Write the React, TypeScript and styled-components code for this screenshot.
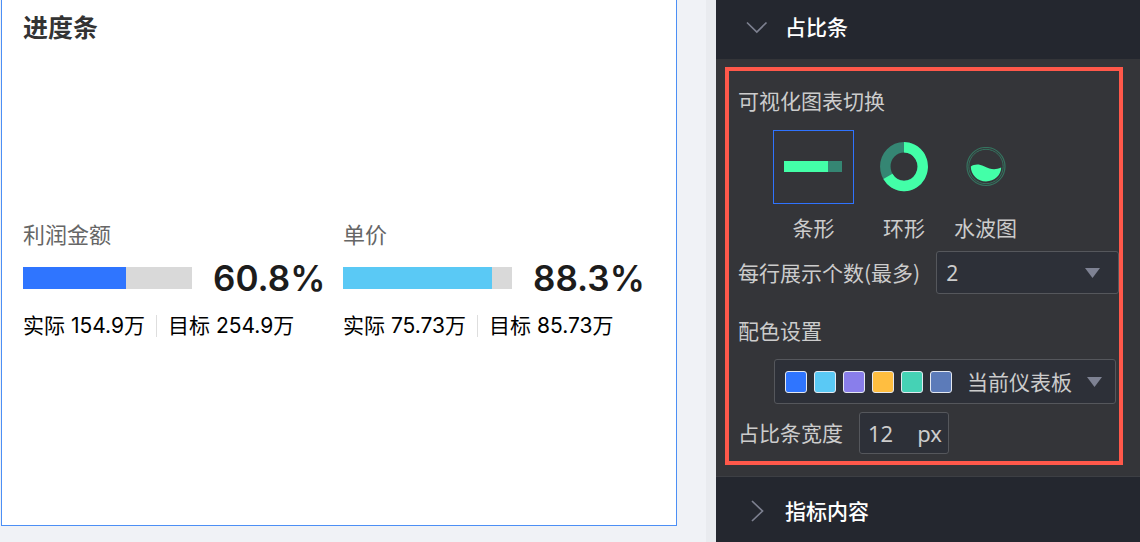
import React, { useState } from "react";
import styled, { createGlobalStyle } from "styled-components";

const GlobalStyle = createGlobalStyle`
  *, *::before, *::after { box-sizing: border-box; }
  body {
    margin: 0;
    background: #f0f2f6;
    font-family: "Noto Sans CJK SC", sans-serif;
  }
  h1, h2, p, fieldset { margin: 0; padding: 0; border: 0; }
`;

const Page = styled.div`
  display: flex;
  min-height: 100vh;
`;

const Canvas = styled.main`
  display: flex;
  flex: 1;
  min-width: 0;
  padding: 0 29px 16px 1px;
`;

const Card = styled.section`
  display: flex;
  flex: 1;
  flex-direction: column;
  min-width: 0;
  padding: 11px 33px 8px 21px;
  border: 1px solid #4c8ff5;
  border-top: 0;
  background: #fff;
`;

const CardTitle = styled.h1`
  color: #333;
  font-size: 25px;
  font-weight: 700;
  line-height: 30px;
`;

const Metrics = styled.div`
  display: grid;
  flex: 1;
  grid-template-columns: 1fr 1fr;
  align-content: center;
  column-gap: 20px;
`;

const Metric = styled.article`
  display: flex;
  flex-direction: column;
  min-width: 0;
`;

const MetricName = styled.h2`
  color: #666;
  font-size: 22px;
  font-weight: 400;
  line-height: 30px;
`;

const MetricBar = styled.div`
  display: flex;
  align-items: center;
  gap: 21px;
  margin: 8px 0 11px;
`;

const Track = styled.div`
  flex: 1;
  height: 22px;
  background: #d9d9d9;
`;

const Fill = styled.div<{ $color: string }>`
  height: 100%;
  background: ${(p) => p.$color};
`;

const Percent = styled.strong`
  width: 110px;
  color: #1c1c1c;
  font-family: Inter, sans-serif;
  font-size: 35px;
  font-weight: 600;
  line-height: 44px;
  white-space: nowrap;
`;

const Values = styled.p`
  display: flex;
  align-items: center;
  color: #000;
  font-family: Inter, "Noto Sans CJK SC", sans-serif;
  font-size: 21px;
  line-height: 30px;
  white-space: nowrap;
`;

const Divider = styled.span`
  width: 1px;
  height: 22px;
  margin: 0 11px;
  background: #dedede;
`;

const Sidebar = styled.aside`
  flex: 0 0 434px;
  border-left: 10px solid #e9ebef;
  background: #24272f;
`;

const SectionHeader = styled.button<{ $tall?: boolean }>`
  display: flex;
  align-items: center;
  gap: 17px;
  width: 100%;
  height: ${(p) => (p.$tall ? 66 : 59)}px;
  padding: ${(p) => (p.$tall ? "2px 30px 0" : "0 30px 6px")};
  border: 0;
  border-top: ${(p) => (p.$tall ? "1px solid #3d3f44" : "0")};
  background: #24272f;
  color: #fff;
  font-family: inherit;
  font-size: 21px;
  font-weight: 500;
  line-height: 30px;
`;

const SectionTitle = styled.span`
  padding-bottom: 2px;
`;

const SectionBody = styled.div`
  padding: 8px 17px 11px 9px;
  background: #343539;
`;

const Highlight = styled.form`
  padding: 14px 0 7px 9px;
  border: 4px solid #ff584a;
  color: #ccc;
  font-size: 21px;
  line-height: 30px;
`;

const ChartTypes = styled.fieldset`
  min-width: 0;
`;

const Legend = styled.legend`
  padding: 0;
`;

const ChoiceList = styled.div`
  display: flex;
  gap: 26px;
  margin: 15px 0 9px 35px;
`;

const Choice = styled.label`
  display: flex;
  flex-direction: column;
  align-items: center;
  gap: 8px;
  cursor: pointer;
`;

const Radio = styled.input`
  position: absolute;
  opacity: 0;
  pointer-events: none;
`;

const Thumb = styled.span<{ $active: boolean }>`
  display: flex;
  align-items: center;
  justify-content: center;
  width: ${(p) => (p.$active ? "81px" : "auto")};
  height: 74px;
  border: ${(p) => (p.$active ? "1px solid #2f73ff" : "0")};
`;

const Row = styled.div`
  display: flex;
  align-items: center;
  gap: 16px;
`;

const RowLabel = styled.label`
  padding-bottom: 2px;
  white-space: nowrap;
`;

const SchemeLabel = styled.label`
  display: block;
  margin: 21px 0 14px;
`;

const Field = styled.div`
  display: flex;
  align-items: center;
  height: 43px;
  border: 1px solid #55575c;
  border-radius: 3px;
  background: #2d3038;
`;

const CountField = styled(Field)`
  flex: 1;
  min-width: 0;
  padding: 0 18px 0 9px;
`;

const SchemeField = styled(Field)`
  height: 45px;
  margin: 0 3px 8px 36px;
  padding: 0 13px 0 10px;
`;

const WidthField = styled(Field)`
  width: 90px;
  height: 42px;
  padding: 0 6px 0 8px;
`;

const Select = styled.select`
  flex: 1;
  min-width: 0;
  height: 30px;
  padding: 0;
  border: 0;
  outline: 0;
  appearance: none;
  background: transparent;
  color: inherit;
  font-family: "Noto Sans", "Noto Sans CJK SC", sans-serif;
  font-size: 21px;
  line-height: 30px;
`;

const Swatches = styled.span`
  display: flex;
  gap: 7px;
  margin-right: 15px;
`;

const Swatch = styled.span<{ $color: string }>`
  width: 22px;
  height: 22px;
  border: 1px solid #e4e8f0;
  border-radius: 3px;
  background: ${(p) => p.$color};
`;

const NumberInput = styled.input`
  flex: 1;
  min-width: 0;
  width: 0;
  padding: 0;
  border: 0;
  outline: 0;
  background: transparent;
  color: inherit;
  font-family: "Noto Sans", sans-serif;
  font-size: 22px;
  line-height: 30px;
`;

const Unit = styled.span`
  font-family: "Noto Sans", sans-serif;
  font-size: 22px;
`;

const Caret = () => (
  <svg width="15" height="10" viewBox="0 0 15 10" aria-hidden="true">
    <path d="M0 0H15L7.5 10Z" fill="#7e8293" />
  </svg>
);

const Chevron = ({ open }: { open: boolean }) => (
  <svg width="22" height="22" viewBox="0 0 22 22" fill="none" stroke="#7d8090" strokeWidth="1.7" aria-hidden="true">
    <path d={open ? "M1 6.5L10.8 16L20.5 6.5" : "M6 1L16.5 11L6 21"} />
  </svg>
);

const BarIcon = () => (
  <svg width="59" height="12" viewBox="0 0 59 12" aria-hidden="true">
    <rect width="58" height="11" fill="#358673" />
    <rect width="44" height="11" fill="#43ffa8" />
  </svg>
);

const RingIcon = () => (
  <svg width="48" height="50" viewBox="0 0 48 50" fill="none" strokeWidth="10.5" aria-hidden="true">
    <ellipse cx="24" cy="24.6" rx="18.7" ry="19.3" stroke="#358673" />
    <path d="M24 5.3A18.7 19.3 0 1 1 7.9 34.4" stroke="#43ffa8" />
  </svg>
);

const WaveIcon = () => (
  <svg width="40" height="40" viewBox="0 0 40 40" aria-hidden="true">
    <g fill="none" stroke="#35735f">
      <circle cx="20" cy="19.5" r="19" strokeWidth="1.2" />
      <circle cx="20" cy="19.5" r="17.2" strokeWidth="1" />
    </g>
    <path
      d="M4.8 19.5C8.5 17 13 16.8 18 19.3C25 22.8 29 23.3 35.2 20.6C35.2 28 28.5 34.5 20 34.5C11.5 34.5 4.8 27.7 4.8 19.5Z"
      fill="#43ffa8"
    />
  </svg>
);

const metrics = [
  { name: "利润金额", percent: 60.8, color: "#2f75ff", actual: "154.9万", target: "254.9万" },
  { name: "单价", percent: 88.3, color: "#5ac9f5", actual: "75.73万", target: "85.73万" },
];

const chartTypes = [
  { id: "bar", name: "条形", Icon: BarIcon },
  { id: "ring", name: "环形", Icon: RingIcon },
  { id: "wave", name: "水波图", Icon: WaveIcon },
];

const palette = ["#2f75ff", "#5ac9f5", "#897eeb", "#ffbe40", "#45d2b5", "#5c7bb9"];

export default function App() {
  const [chart, setChart] = useState("bar");
  const [open, setOpen] = useState(true);

  return (
    <>
      <GlobalStyle />
      <Page>
        <Canvas>
          <Card>
            <CardTitle>进度条</CardTitle>
            <Metrics>
              {metrics.map((m) => (
                <Metric key={m.name}>
                  <MetricName>{m.name}</MetricName>
                  <MetricBar>
                    <Track>
                      <Fill $color={m.color} style={{ width: `${m.percent}%` }} />
                    </Track>
                    <Percent>{m.percent}%</Percent>
                  </MetricBar>
                  <Values>
                    <span>实际 {m.actual}</span>
                    <Divider />
                    <span>目标 {m.target}</span>
                  </Values>
                </Metric>
              ))}
            </Metrics>
          </Card>
        </Canvas>
        <Sidebar>
          <SectionHeader type="button" aria-expanded={open} onClick={() => setOpen(!open)}>
            <Chevron open={open} />
            <SectionTitle>占比条</SectionTitle>
          </SectionHeader>
          {open && (
            <SectionBody>
              <Highlight>
                <ChartTypes>
                  <Legend>可视化图表切换</Legend>
                  <ChoiceList>
                    {chartTypes.map(({ id, name, Icon }) => (
                      <Choice key={id}>
                        <Radio type="radio" name="chart" checked={chart === id} onChange={() => setChart(id)} />
                        <Thumb $active={chart === id}>
                          <Icon />
                        </Thumb>
                        {name}
                      </Choice>
                    ))}
                  </ChoiceList>
                </ChartTypes>
                <Row>
                  <RowLabel htmlFor="count">每行展示个数(最多)</RowLabel>
                  <CountField>
                    <Select id="count" defaultValue="2">
                      <option>1</option>
                      <option>2</option>
                      <option>3</option>
                    </Select>
                    <Caret />
                  </CountField>
                </Row>
                <SchemeLabel htmlFor="scheme">配色设置</SchemeLabel>
                <SchemeField>
                  <Swatches>
                    {palette.map((c) => (
                      <Swatch key={c} $color={c} />
                    ))}
                  </Swatches>
                  <Select id="scheme">
                    <option>当前仪表板</option>
                  </Select>
                  <Caret />
                </SchemeField>
                <Row>
                  <RowLabel htmlFor="width">占比条宽度</RowLabel>
                  <WidthField>
                    <NumberInput id="width" inputMode="numeric" defaultValue="12" />
                    <Unit>px</Unit>
                  </WidthField>
                </Row>
              </Highlight>
            </SectionBody>
          )}
          <SectionHeader type="button" $tall aria-expanded={false}>
            <Chevron open={false} />
            <SectionTitle>指标内容</SectionTitle>
          </SectionHeader>
        </Sidebar>
      </Page>
    </>
  );
}
